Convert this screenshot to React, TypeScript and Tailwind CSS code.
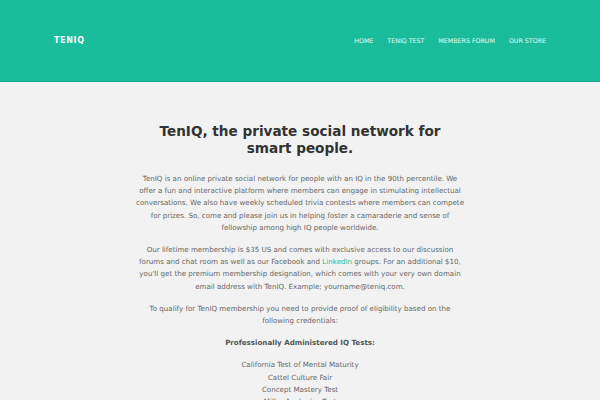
export default function App() {
  const nav = ["Home", "TenIQ Test", "Members Forum", "Our Store"];
  const tests = [
    "California Test of Mental Maturity",
    "Cattel Culture Fair",
    "Concept Mastery Test",
    "Miller Analogies Test",
  ];

  return (
    <div className="min-h-[400px] bg-[#f2f2f2] font-['DejaVu_Sans',sans-serif]">
      {/* Header */}
      <header className="h-[82px] bg-[#1abc9c] border-b border-[#17a88b] flex items-center justify-between px-[54px]">
        <a href="#" className="text-white text-[8px] font-bold tracking-[0.08em]">
          TENIQ
        </a>
        <nav className="flex items-center gap-[14px]">
          {nav.map((item) => (
            <a key={item} href="#" className="text-white/90 text-[6.3px] uppercase">
              {item}
            </a>
          ))}
        </nav>
      </header>
      <div className="h-[3px] bg-[#f4f3f8]" />

      {/* Content */}
      <main className="w-[330px] mx-auto pt-[38px] text-center">
        <h1 className="text-[#333] text-[13.6px] leading-[17px] font-bold">
          TenIQ, the private social network for smart people.
        </h1>
        <div className="mt-[16px] text-[#666] text-[7.1px] leading-[12.2px] flex flex-col gap-[10px]">
          <p>
            TenIQ is an online private social network for people with an IQ in the 90th percentile. We offer a fun and
            interactive platform where members can engage in stimulating intellectual conversations. We also have
            weekly scheduled trivia contests where members can compete for prizes. So, come and please join us in
            helping foster a camaraderie and sense of fellowship among high IQ people worldwide.
          </p>
          <p>
            Our lifetime membership is $35 US and comes with exclusive access to our discussion forums and chat room as
            well as our Facebook and <a href="#" className="text-[#1abc9c]">LinkedIn</a> groups. For an additional
            $10, you'll get the premium membership designation, which comes with your very own domain email address
            with TenIQ. Example; yourname@teniq.com.
          </p>
          <p>
            To qualify for TenIQ membership you need to provide proof of eligibility based on the following credentials:
          </p>
          <p className="font-bold text-[#555]">Professionally Administered IQ Tests:</p>
          <ul>
            {tests.map((t) => (
              <li key={t}>{t}</li>
            ))}
          </ul>
        </div>
      </main>
    </div>
  );
}
